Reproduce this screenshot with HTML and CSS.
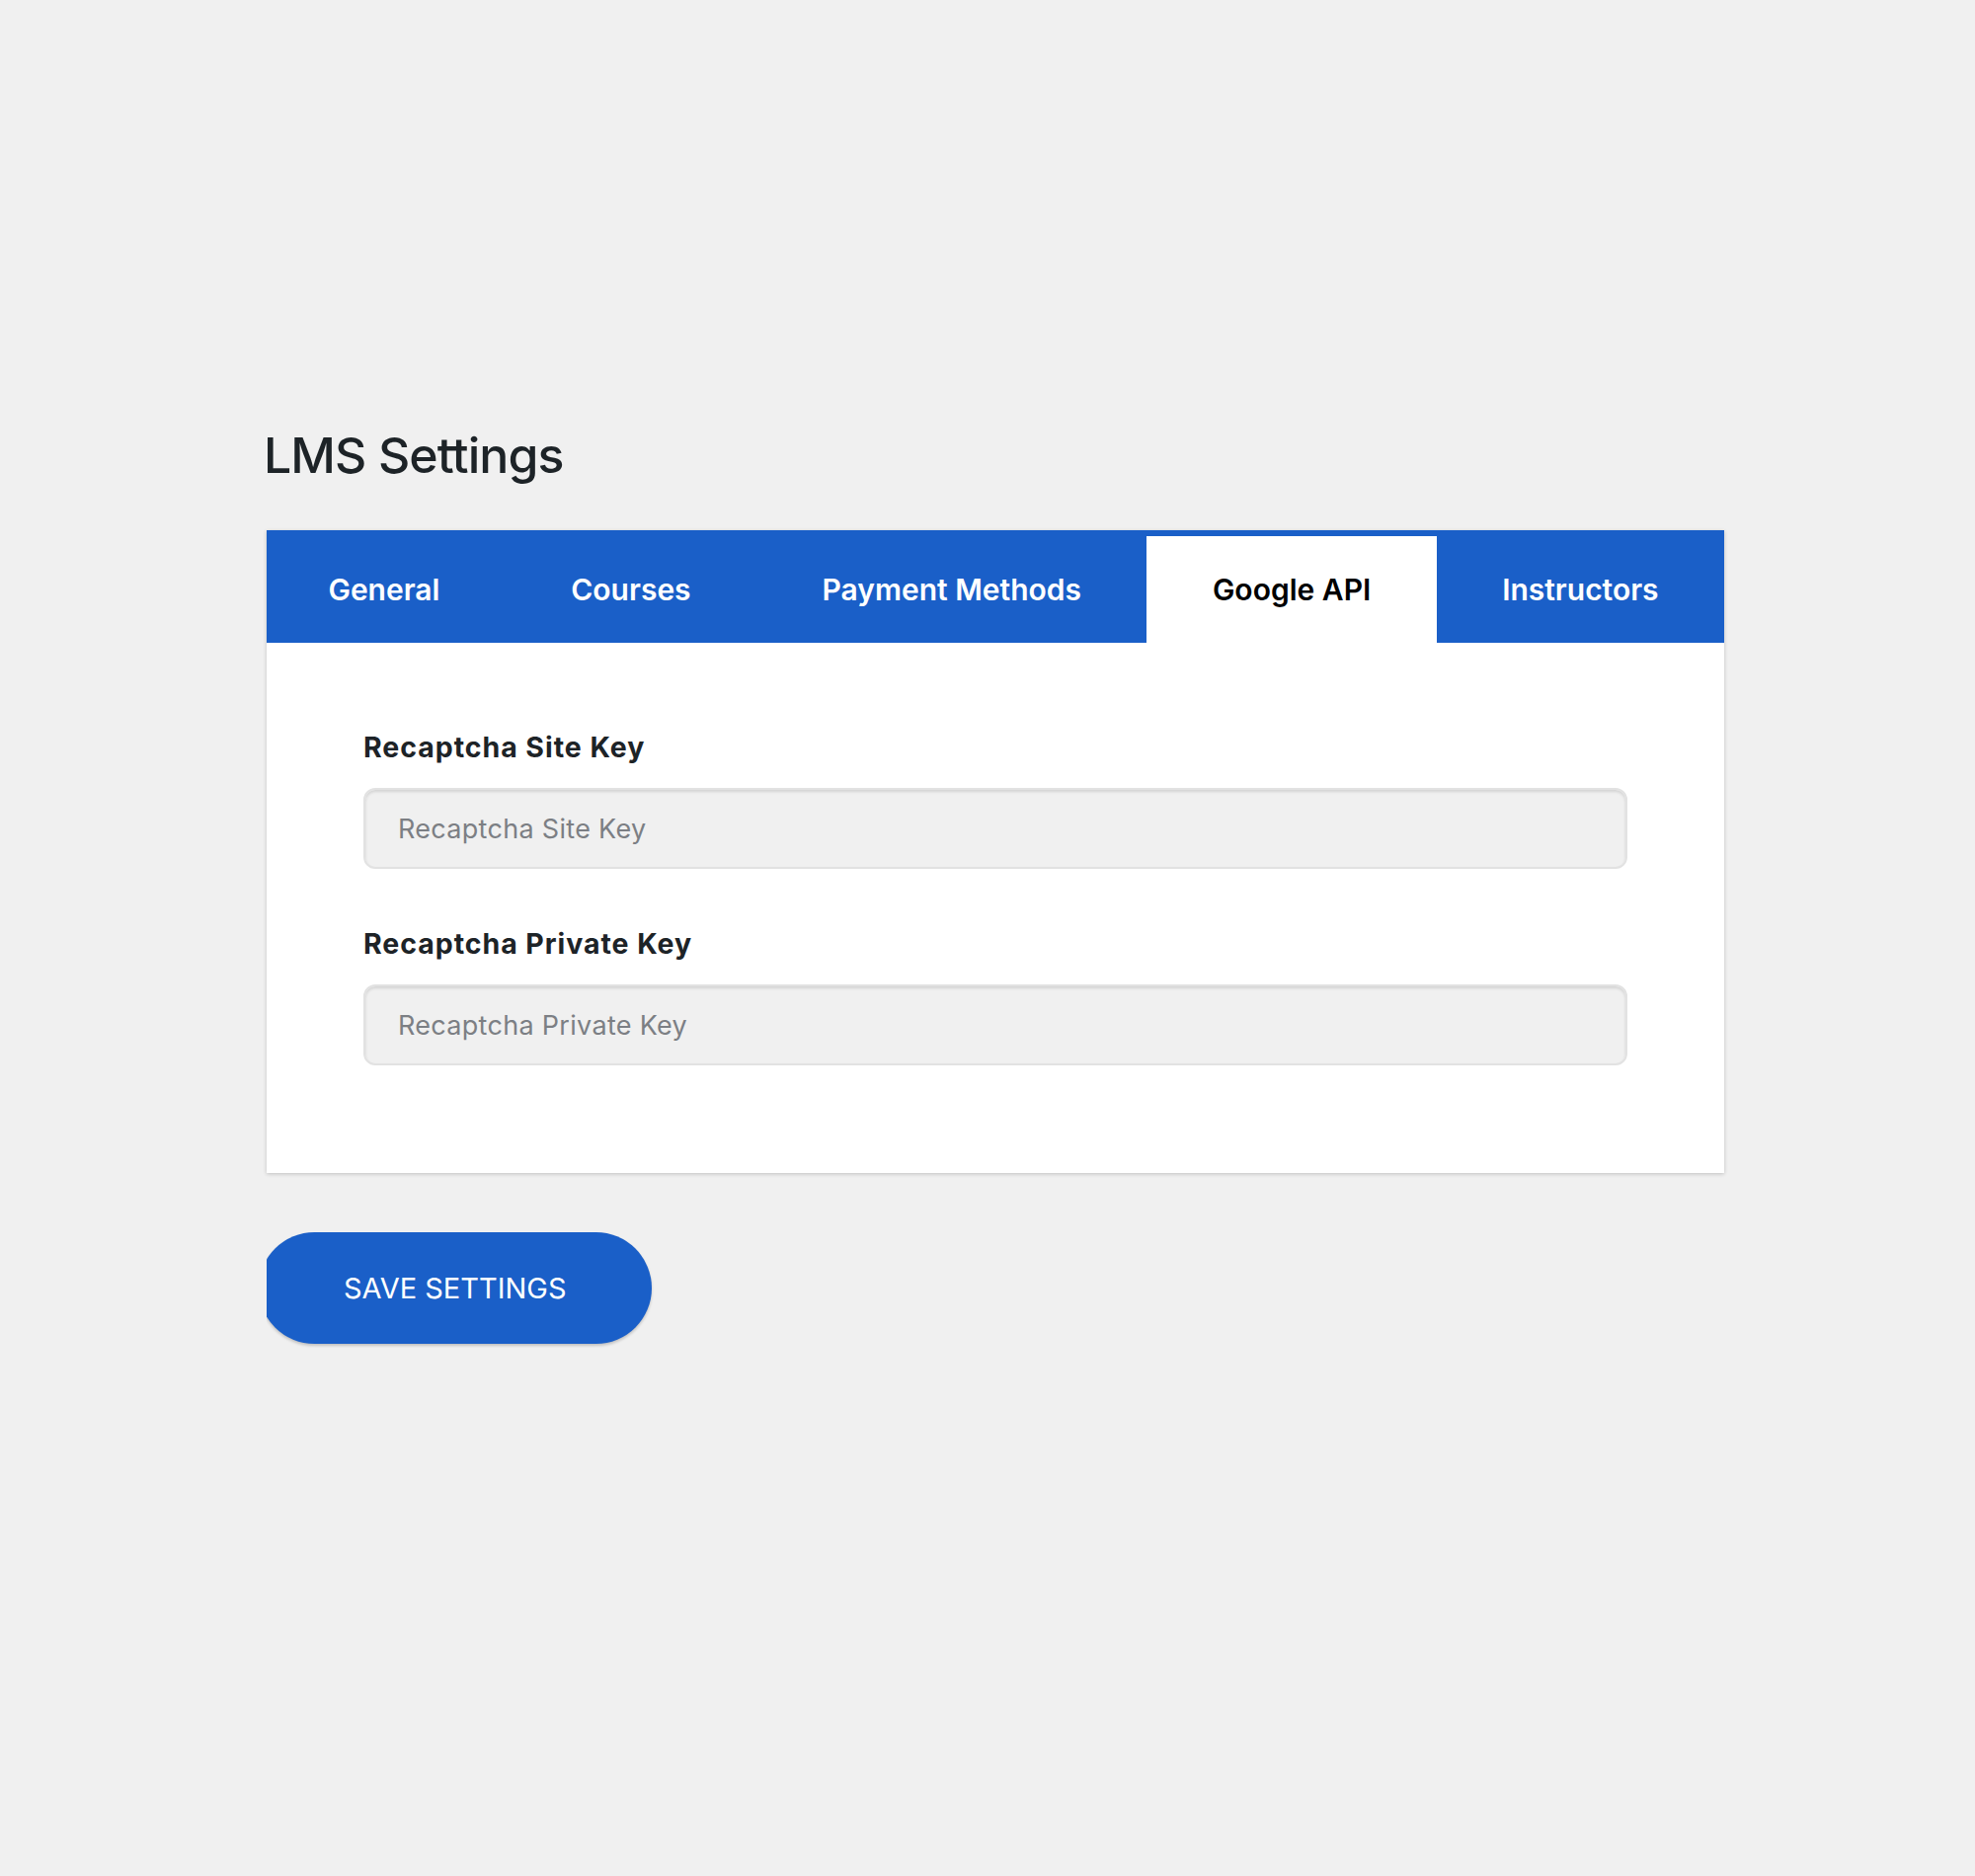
FILE: index.html
```html
<!DOCTYPE html>
<html lang="en">
<head>
  <meta charset="UTF-8">
  <meta name="viewport" content="width=device-width, initial-scale=1.0">
  <title>LMS Settings</title>
  <link rel="stylesheet" href="styles.css">
</head>
<body>
  <div class="wrap">
    <h1>LMS Settings</h1>
    <div class="card">
      <div class="tabs">
        <a class="tab" href="#">General</a>
        <a class="tab" href="#">Courses</a>
        <a class="tab" href="#">Payment Methods</a>
        <a class="tab active" href="#">Google API</a>
        <a class="tab" href="#">Instructors</a>
      </div>
      <div class="panel">
        <div class="field">
          <label for="siteKey">Recaptcha Site Key</label>
          <input type="text" id="siteKey" placeholder="Recaptcha Site Key">
        </div>
        <div class="field">
          <label for="privateKey">Recaptcha Private Key</label>
          <input type="text" id="privateKey" placeholder="Recaptcha Private Key">
        </div>
      </div>
    </div>
    <div class="actions">
      <button type="button">SAVE SETTINGS</button>
    </div>
  </div>
</body>
</html>
```

FILE: styles.css
```css
body {
  margin: 0;
  background: #f0f0f0;
  font-family: Inter, "Noto Sans", Arial, sans-serif;
  color: #1d2327;
}
.wrap {
  width: 1476px;
  margin: 430px 0 0 270px;
}
h1 {
  margin: 0 0 45px -3px;
  font-size: 50px;
  line-height: 62px;
  font-weight: 500;
  letter-spacing: -0.9px;
}
.card {
  background: #fff;
  box-shadow: 0 1px 4px rgba(0,0,0,0.2);
}
.tabs {
  display: flex;
  background: #1a5fc8;
  padding-top: 6px;
}
.tab {
  flex: 1 1 auto;
  height: 108px;
  display: flex;
  align-items: center;
  justify-content: center;
  padding: 0 60px;
  color: #fff;
  text-decoration: none;
  font-size: 30px;
  font-weight: 600;
  white-space: nowrap;
}
.tab:first-child {
  padding-left: 56px;
}
.tab.active {
  background: #fff;
  color: #000;
}
.panel {
  padding: 88px 98px 109px;
}
.field + .field {
  margin-top: 58px;
}
label {
  display: block;
  font-size: 28.5px;
  line-height: 36px;
  font-weight: 700;
  letter-spacing: 0.95px;
  margin-bottom: 23px;
}
input {
  display: block;
  width: 100%;
  height: 82px;
  box-sizing: border-box;
  padding: 0 33px;
  border: 2px solid #e2e2e2;
  border-radius: 12px;
  background: #f0f0f0;
  box-shadow: inset 0 2px 3px rgba(0,0,0,0.12);
  font-family: inherit;
  font-size: 27px;
  letter-spacing: 0.3px;
  color: #1d2327;
  outline: none;
}
input::placeholder {
  color: #7c7f84;
}
.actions {
  margin-top: 60px;
  overflow: hidden;
  padding-bottom: 6px;
}
button {
  margin-left: -8px;
  height: 113px;
  padding: 0 86px;
  border: none;
  border-radius: 57px;
  background: #1a5fc8;
  color: #fff;
  font-family: inherit;
  font-size: 29px;
  font-weight: 400;
  box-shadow: 0 2px 3px rgba(0,0,0,0.2);
  cursor: pointer;
}
```
